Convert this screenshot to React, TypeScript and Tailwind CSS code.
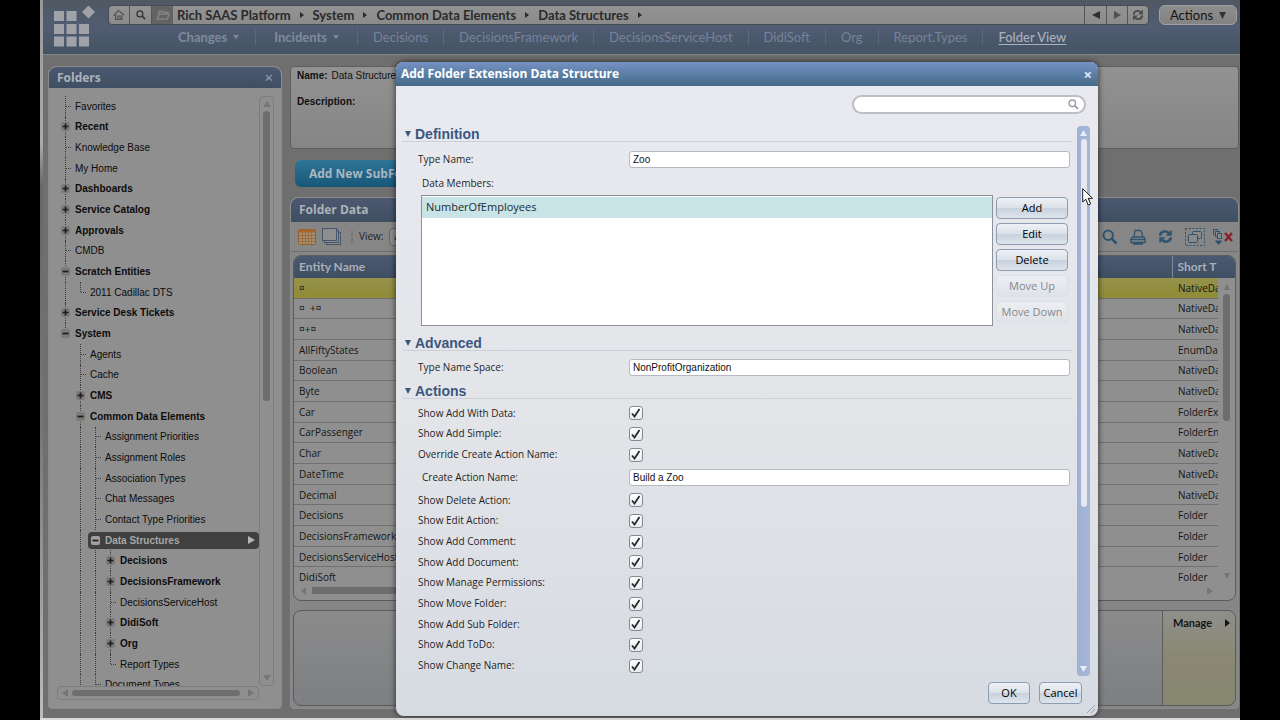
import React from "react";

type Node = { label: string; guides: string; state?: "plus" | "minus"; last?: boolean; selected?: boolean };

/* guides: one letter for each ancestor column, "l" for a dotted line, "b" for blank */
const tree: Node[] = [
  { label: "Favorites", guides: "" },
  { label: "Recent", guides: "", state: "plus" },
  { label: "Knowledge Base", guides: "" },
  { label: "My Home", guides: "" },
  { label: "Dashboards", guides: "", state: "plus" },
  { label: "Service Catalog", guides: "", state: "plus" },
  { label: "Approvals", guides: "", state: "plus" },
  { label: "CMDB", guides: "" },
  { label: "Scratch Entities", guides: "", state: "minus" },
  { label: "2011 Cadillac DTS", guides: "l", last: true },
  { label: "Service Desk Tickets", guides: "", state: "plus" },
  { label: "System", guides: "", state: "minus", last: true },
  { label: "Agents", guides: "b" },
  { label: "Cache", guides: "b" },
  { label: "CMS", guides: "b", state: "plus" },
  { label: "Common Data Elements", guides: "b", state: "minus" },
  { label: "Assignment Priorities", guides: "bl" },
  { label: "Assignment Roles", guides: "bl" },
  { label: "Association Types", guides: "bl" },
  { label: "Chat Messages", guides: "bl" },
  { label: "Contact Type Priorities", guides: "bl" },
  { label: "Data Structures", guides: "bl", state: "minus", selected: true },
  { label: "Decisions", guides: "bll", state: "plus" },
  { label: "DecisionsFramework", guides: "bll", state: "plus" },
  { label: "DecisionsServiceHost", guides: "bll" },
  { label: "DidiSoft", guides: "bll", state: "plus" },
  { label: "Org", guides: "bll", state: "plus" },
  { label: "Report Types", guides: "bll", last: true },
  { label: "Document Types", guides: "bl" },
];

const entities: [string, string][] = [
  ["¤", "NativeDa"],
  ["¤  +¤", "NativeDa"],
  ["¤+¤", "NativeDa"],
  ["AllFiftyStates", "EnumDa"],
  ["Boolean", "NativeDa"],
  ["Byte", "NativeDa"],
  ["Car", "FolderEx"],
  ["CarPassenger", "FolderEn"],
  ["Char", "NativeDa"],
  ["DateTime", "NativeDa"],
  ["Decimal", "NativeDa"],
  ["Decisions", "Folder"],
  ["DecisionsFramework", "Folder"],
  ["DecisionsServiceHost", "Folder"],
  ["DidiSoft", "Folder"],
];

const crumbs = ["Rich SAAS Platform", "System", "Common Data Elements", "Data Structures"];
const menu = ["Decisions", "DecisionsFramework", "DecisionsServiceHost", "DidiSoft", "Org", "Report.Types"];
const createFlags = ["Show Add With Data:", "Show Add Simple:", "Override Create Action Name:"];
const actionFlags = [
  "Show Delete Action:",
  "Show Edit Action:",
  "Show Add Comment:",
  "Show Add Document:",
  "Show Manage Permissions:",
  "Show Move Folder:",
  "Show Add Sub Folder:",
  "Show Add ToDo:",
  "Show Change Name:",
];

function Tri({ dir, className = "" }: { dir: "up" | "down" | "left" | "right"; className?: string }) {
  const d = { up: "M4 0L8 8H0Z", down: "M0 0H8L4 8Z", left: "M8 0V8L0 4Z", right: "M0 0L8 4L0 8Z" }[dir];
  return (
    <svg viewBox="0 0 8 8" preserveAspectRatio="none" className={`shrink-0 ${className}`} fill="currentColor" aria-hidden="true">
      <path d={d} />
    </svg>
  );
}

function Lens({ className = "" }: { className?: string }) {
  return (
    <svg viewBox="0 0 16 16" className={`shrink-0 ${className}`} fill="none" stroke="currentColor" aria-hidden="true">
      <circle cx="6.2" cy="6.2" r="4.700" strokeWidth="2" />
      <path d="M9.5 9.5L14.5 14.5" strokeWidth="2.6" />
    </svg>
  );
}

function Refresh({ className = "" }: { className?: string }) {
  return (
    <svg viewBox="0 0 16 16" className={`shrink-0 ${className}`} fill="currentColor" aria-hidden="true">
      <path d="M1 7.2C1 3.5 3.8 1.2 7.4 1.2C9.3 1.2 10.9 1.9 12 3L14.6 0.8V7.2H8.2L10.3 5C9.5 4.2 8.5 3.8 7.4 3.8C5.2 3.8 4 5.2 3.8 7.2Z" />
      <path d="M15 8.8C15 12.5 12.2 14.8 8.6 14.8C6.7 14.8 5.1 14.1 4 13L1.4 15.2V8.8H7.8L5.7 11C6.5 11.8 7.5 12.2 8.6 12.2C10.8 12.2 12 10.8 12.2 8.8Z" />
    </svg>
  );
}

function Logo() {
  return (
    <svg viewBox="0 0 42 42" className="h-[42px] w-[42px] shrink-0 text-[#9fa3a8]" fill="currentColor" aria-label="Logo">
      <path d="M0 6h10v10H0zM12.500 6h10v10h-10zM0 19h10v10H0zM12.500 19h10v10h-10zM25 19h10v10H25zM0 31.500h10v10H0zM12.500 31.500h10v10h-10zM25 31.500h10v10H25z" />
      <path d="M34.500 0.500L41 7L34.500 13.500L28 7Z" />
    </svg>
  );
}

function TreeRow({ node }: { node: Node }) {
  const { label, guides, state, last, selected } = node;
  return (
    <li className="flex min-h-0 flex-1 items-center">
      {guides.split("").map((g, i) => (
        <span key={i} className="flex h-full w-[15px] shrink-0 justify-center">
          {g === "l" && <span className="h-full border-l border-dotted border-[#3c3c3c]" />}
        </span>
      ))}
      <span
        className={`flex items-center ${
          selected ? "h-[17px] min-w-0 flex-1 rounded bg-[#404040] pr-1 font-bold text-[#a6a6a6]" : "h-full"
        }`}
      >
        <span className="grid h-full w-[15px] shrink-0 items-center justify-items-center">
          {!selected && (
            <span className={`col-start-1 row-start-1 border-l border-dotted border-[#3c3c3c] ${last ? "h-1/2 self-start" : "h-full"}`} />
          )}
          {state ? (
            <svg viewBox="0 0 9 9" className="col-start-1 row-start-1 h-[9px] w-[9px]" aria-hidden="true">
              <rect width="9" height="9" rx="2" fill={selected ? "#a0a0a0" : "#7b7b7b"} />
              <path d={state === "plus" ? "M1.500 4.500H7.500M4.500 1.500V7.500" : "M1.500 4.500H7.500"} stroke="#1c1c1c" strokeWidth="1.700" />
            </svg>
          ) : (
            <span className="col-start-1 row-start-1 ml-[5px] w-[5px] border-t border-dotted border-[#3c3c3c]" />
          )}
        </span>
        <a href="#node" className={`pl-[2px] whitespace-nowrap ${state ? "font-bold" : ""}`}>
          {label}
        </a>
        {selected && <Tri dir="right" className="ml-auto h-2 w-[7px] text-[#b5b5b5]" />}
      </span>
    </li>
  );
}

function Folders() {
  return (
    <aside className="flex w-[234px] shrink-0 flex-col rounded-t-lg rounded-b border border-[#8b8b8b] bg-[#8f8f8f]">
      <header className="flex h-[21px] shrink-0 items-center justify-between rounded-t-lg bg-gradient-to-b from-[#4b5870] to-[#3f4f63] px-2 font-['Open_Sans',sans-serif] text-[12px] leading-4 font-bold text-[#adb2ba]">
        <h2>Folders</h2>
        <button aria-label="Close folders" className="text-[15px] leading-none font-normal text-[#9aa3b0]">×</button>
      </header>
      <div className="flex min-h-0 flex-1 pt-2 pr-[7px] pl-[9px]">
        <div className="min-w-0 flex-1 overflow-hidden">
          <ul className="flex h-[599px] flex-col text-[10px] text-[#0c0c0c]">
            {tree.map((n) => (
              <TreeRow key={n.label} node={n} />
            ))}
          </ul>
        </div>
        <div className="flex w-[15px] flex-col items-center justify-between rounded border border-[#7c7c7c] py-1 text-[#757575]">
          <Tri dir="up" className="h-[6px] w-2" />
          <span className="mt-1 mb-auto h-[290px] w-[7px] rounded-full bg-[#6d6d6d]" />
          <Tri dir="down" className="h-[6px] w-2" />
        </div>
      </div>
      <div className="mr-[22px] mb-2 ml-2 flex h-[14px] shrink-0 items-center gap-1 rounded border border-[#7c7c7c] px-1 text-[#757575]">
        <Tri dir="left" className="h-2 w-[6px]" />
        <span className="h-[6px] flex-1 rounded-full bg-[#6d6d6d]" />
        <Tri dir="right" className="ml-1 h-2 w-[6px]" />
      </div>
    </aside>
  );
}

function TopBar() {
  return (
    <header className="flex h-[55px] shrink-0 gap-3 border-b border-[#80868c] bg-gradient-to-b from-[#505863] via-[#505c72] to-[#445463] pt-[5px] pr-[3px] pl-[11px]">
      <Logo />
      <div className="flex min-w-0 flex-1 flex-col">
        <div className="flex h-5 items-stretch">
          <div className="flex min-w-0 flex-1 overflow-hidden rounded border border-[#474c54] bg-gradient-to-b from-[#939393] to-[#8b8b8b]">
            <button aria-label="Home" className="flex w-[21px] items-center justify-center border-r border-[#555] text-[#555]">
              <svg viewBox="0 0 16 16" className="h-3 w-3" fill="none" stroke="currentColor" strokeWidth="1.600" aria-hidden="true">
                <path d="M1 9L7 2L15 8M3.500 8V14H12V8M6.500 14V9.500H9.500V14" />
              </svg>
            </button>
            <button aria-label="Search" className="flex w-[22px] items-center justify-center border-r border-[#555] text-[#333]">
              <Lens className="h-[10px] w-[10px]" />
            </button>
            <button aria-label="Folder" className="flex w-[21px] items-center justify-center bg-[#636363] text-[#858585]">
              <svg viewBox="0 0 16 12" className="h-[10px] w-[14px]" fill="none" stroke="currentColor" strokeWidth="1.600" aria-hidden="true">
                <path d="M3 5V2L8 1.500L9 3H14V5M1 11L3.500 5H15.500L13 11Z" />
              </svg>
            </button>
            <nav aria-label="Breadcrumb" className="flex min-w-0 flex-1 items-center pl-1 font-[Lato,sans-serif] text-[13px] leading-4 font-bold text-[#2a2a2a]">
              {crumbs.map((c) => (
                <span key={c} className="flex items-center">
                  <a href="#crumb" className="whitespace-nowrap">{c}</a>
                  <Tri dir="right" className="mx-[9px] h-[6px] w-1" />
                </span>
              ))}
            </nav>
            <button aria-label="Back" className="flex w-[22px] items-center justify-center border-l border-[#555] text-[#2f2f2f]">
              <Tri dir="left" className="h-2 w-2" />
            </button>
            <button aria-label="Forward" className="flex w-[21px] items-center justify-center border-l border-[#555] text-[#505050]">
              <Tri dir="right" className="h-2 w-[7px]" />
            </button>
            <button aria-label="Refresh" className="flex w-[21px] items-center justify-center border-l border-[#555] text-[#4c4c4c]">
              <Refresh className="h-3 w-3" />
            </button>
          </div>
          <button className="ml-[10px] flex w-[78px] items-center justify-center gap-[6px] rounded-md border border-[#a0a0a0] bg-gradient-to-b from-[#8d8d8d] to-[#838383] font-[Lato,sans-serif] text-[13px] leading-4 text-[#141414]">
            Actions <Tri dir="down" className="h-[7px] w-[7px] text-[#333]" />
          </button>
        </div>
        <nav aria-label="Main" className="flex h-6 items-center pl-[70px] font-[Lato,sans-serif] text-[13px] leading-4 whitespace-nowrap text-[#78829a]">
          <a href="#changes" className="flex items-center gap-[6px] pr-4 font-bold text-[#808a9c]">
            Changes <Tri dir="down" className="h-1 w-[6px]" />
          </a>
          <a href="#incidents" className="flex items-center gap-[6px] border-l border-[#5d687c] px-[18px] font-bold text-[#808a9c]">
            Incidents <Tri dir="down" className="h-1 w-[6px]" />
          </a>
          {menu.map((m) => (
            <a key={m} href="#menu" className="border-l border-[#5d687c] px-[15px]">{m}</a>
          ))}
          <a href="#folder" className="border-l border-[#5d687c] px-[15px] font-medium text-[#a9b0bd] underline underline-offset-2">
            Folder View
          </a>
        </nav>
      </div>
    </header>
  );
}

function FolderData() {
  return (
    <section className="flex min-h-0 flex-1 flex-col rounded-t-lg rounded-b border border-[#8b8b8b] bg-[#868686] font-['Open_Sans',sans-serif]">
      <h2 className="flex h-6 shrink-0 items-center rounded-t-lg bg-gradient-to-b from-[#4c5870] to-[#3f4f62] px-2 text-[12px] leading-4 font-bold text-[#adb2ba]">Folder Data</h2>
      <div className="flex h-[30px] shrink-0 items-center gap-[6px] border-b border-[#6e6e6e] pr-[5px] pl-[7px] text-[10px] text-[#222]">
        <svg viewBox="0 0 18 16" className="h-4 w-[18px]" aria-hidden="true">
          <rect x="0.500" y="0.500" width="17" height="15" rx="1" fill="#a39077" stroke="#96602c" />
          <path d="M1 2H17" stroke="#a8662a" strokeWidth="3" />
          <path d="M1 6.500H17M1 9.500H17M1 12.500H17M4.500 3V15M7.500 3V15M10.500 3V15M13.500 3V15" stroke="#9c6c3c" />
        </svg>
        <svg viewBox="0 0 19 17" className="h-[17px] w-[19px]" fill="#8e8e8e" stroke="#47556b" aria-hidden="true">
          <rect x="4.500" y="4.500" width="14" height="12" />
          <rect x="2.500" y="2.500" width="14" height="12" />
          <rect x="0.500" y="0.500" width="14" height="12" />
        </svg>
        <span className="ml-1 h-3 border-l-2 border-dotted border-[#707070]" />
        <label htmlFor="view">View:</label>
        <select id="view" className="h-[18px] w-[120px] appearance-none rounded border border-[#666] bg-[#8e8e8e] px-1">
          <option>All</option>
        </select>
        <span className="ml-auto flex items-center gap-3 text-[#2f5470]">
          <button aria-label="Search"><Lens className="h-4 w-4" /></button>
          <button aria-label="Print">
            <svg viewBox="0 0 16 16" className="h-4 w-4" fill="none" stroke="currentColor" strokeWidth="1.300" aria-hidden="true">
              <path d="M4 8L5 1.500H10L12 3.500L12.500 8M1 9.500L3 8H13.500L15 9.500V13.500H1ZM1.500 10.500H14.500M3 15H13" />
            </svg>
          </button>
          <button aria-label="Refresh"><Refresh className="h-[15px] w-[15px]" /></button>
          <button aria-label="Select">
            <svg viewBox="0 0 20 18" className="h-[18px] w-5" fill="#8a8a8a" stroke="currentColor" aria-hidden="true">
              <rect x="0.500" y="0.500" width="19" height="17" strokeDasharray="2 1.500" fill="none" />
              <rect x="7.500" y="3.500" width="9" height="7" rx="1" />
              <rect x="3.500" y="6.500" width="9" height="8" rx="1" />
            </svg>
          </button>
          <button aria-label="Remove" className="-ml-1">
            <svg viewBox="0 0 20 16" className="h-4 w-5" fill="#8a8a8a" stroke="currentColor" aria-hidden="true">
              <rect x="0.500" y="0.500" width="4" height="5" />
              <rect x="2.500" y="2.500" width="4" height="5" />
              <rect x="4.500" y="4.500" width="4" height="5" />
              <path d="M2.500 12H8.500L5.500 15.500Z" fill="#2f5470" />
              <path d="M12 4L19 12M19 4L12 12" stroke="#8d1c24" strokeWidth="2.200" />
            </svg>
          </button>
        </span>
      </div>
      <div className="mx-[2px] mt-[3px] flex h-[346px] shrink-0 flex-col overflow-hidden rounded-lg border border-[#5c5c5c] bg-[#8f8f8f]">
        <div className="flex min-h-0">
          <div className="min-w-0 flex-1">
            <table className="h-[331px] w-full table-fixed border-collapse text-left text-[10px] text-[#151515]">
              <colgroup>
                <col />
                <col className="w-[46px]" />
              </colgroup>
              <thead>
                <tr className="h-[22px] bg-gradient-to-b from-[#4c5972] to-[#3f4f62] font-[Lato,sans-serif] text-[12px] leading-[14px] text-[#a9afb8]">
                  <th className="px-[5px] py-0 font-bold">Entity Name</th>
                  <th className="border-l border-[#7c8798] py-0 pl-[5px] font-bold whitespace-nowrap">Short T</th>
                </tr>
              </thead>
              <tbody>
                {entities.map(([name, type], i) => (
                  <tr key={name} className={i === 0 ? "bg-gradient-to-b from-[#96924c] to-[#8f8b35]" : "border-t border-[#707070]"}>
                    <td className="px-[5px] py-0 leading-[14px] whitespace-pre">{name}</td>
                    <td className="overflow-hidden py-0 pl-[6px] leading-[14px] whitespace-nowrap">{type}</td>
                  </tr>
                ))}
              </tbody>
            </table>
          </div>
          <div className="flex w-[17px] flex-col">
            <div className="h-[22px] shrink-0 bg-gradient-to-b from-[#4c5972] to-[#3f4f62]" />
            <div className="flex flex-1 flex-col items-center pt-[6px] pb-2 text-[#737373]">
              <Tri dir="up" className="h-[6px] w-[6px]" />
              <span className="mt-1 h-[127px] w-[7px] rounded-full bg-[#6d6d6d]" />
              <Tri dir="down" className="mt-auto h-[6px] w-[6px]" />
            </div>
          </div>
        </div>
        <div className="flex flex-1 items-start gap-[6px] pr-[22px] pl-[7px] text-[#757575]">
          <Tri dir="left" className="h-2 w-[5px]" />
          <span className="h-[7px] w-3/4 bg-[#6d6d6d]" />
          <Tri dir="right" className="ml-auto h-2 w-[6px]" />
        </div>
      </div>
      <div className="m-[2px] mt-[9px] flex min-h-0 flex-1 justify-end rounded-lg border border-[#5c5c5c] bg-gradient-to-b from-[#8b8b8b] to-[#7d7f82]">
        <a href="#manage" className="flex w-[73px] items-start justify-between rounded-r-lg border-l border-[#5c5c5c] bg-gradient-to-b from-[#8f8f8b] via-[#8a8873] to-[#87866f] pt-1 pr-[5px] pl-[10px] font-[Lato,sans-serif] text-[11px] font-bold text-[#161616]">
          Manage
          <Tri dir="right" className="mt-1 h-2 w-[5px]" />
        </a>
      </div>
    </section>
  );
}

function Section({ title }: { title: string }) {
  return (
    <h3 className="flex h-4 items-center gap-1 border-b border-[#cdd0da] pl-[3px] font-['Liberation_Sans',Arial,sans-serif] text-[14px] leading-4 font-bold text-[#3a5780]">
      <Tri dir="down" className="h-[6px] w-[6px]" />
      {title}
    </h3>
  );
}

function Check({ label }: { label: string }) {
  const id = label.replace(/\W/g, "");
  return (
    <div className="flex items-center">
      <label htmlFor={id} className="w-[211px]">{label}</label>
      <span className="grid">
        <input id={id} type="checkbox" defaultChecked className="col-start-1 row-start-1 h-[14px] w-[14px] appearance-none rounded-[3px] border border-[#86898f] bg-gradient-to-b from-white to-[#e8eaed]" />
        <svg viewBox="0 0 14 14" className="pointer-events-none col-start-1 row-start-1 h-[14px] w-[14px]" fill="none" stroke="#25282c" strokeWidth="1.800" aria-hidden="true">
          <path d="M3 7.500L5.500 10.500L10.500 3" />
        </svg>
      </span>
    </div>
  );
}

function Field({ label, value, className = "", indent = false }: { label: string; value: string; className?: string; indent?: boolean }) {
  const id = label.replace(/\W/g, "");
  return (
    <div className={`flex items-center ${className}`}>
      <label htmlFor={id} className={`w-[211px] shrink-0 ${indent ? "pl-1" : ""}`}>{label}</label>
      <input id={id} defaultValue={value} className="h-[17px] min-w-0 flex-1 rounded-[3px] border border-[#b4b9c2] bg-white px-[3px] font-['Liberation_Sans',Arial,sans-serif] text-[10px] text-[#111]" />
    </div>
  );
}

const buttonLook = "rounded border border-[#8d9cb0] bg-[linear-gradient(#eef1f5,#dbe1e9_50%,#c8d2de_52%,#dde4eb)] text-[11px] leading-4 text-black";
const disabledLook = "rounded border border-[#dde0e6] bg-gradient-to-b from-[#eceef2] to-[#dfe2e8] text-[11px] leading-4 text-[#85888d]";

function Dialog() {
  return (
    <div role="dialog" aria-label="Add Folder Extension Data Structure" className="absolute top-[62px] bottom-[2px] left-[356px] flex w-[702px] flex-col overflow-hidden rounded-lg bg-gradient-to-b from-[#e9eaf0] via-[#e4e5e9] to-[#d6dbe2] font-['Open_Sans',sans-serif] text-[10px] text-[#1f1f1f] shadow-[0_0_6px_rgba(0,0,0,0.7)]">
      <header className="flex h-6 shrink-0 items-center justify-between bg-gradient-to-b from-[#7691c3] via-[#5b7fa6] to-[#456a88] pr-[6px] pl-[5px] text-[12px] leading-4 font-bold text-white">
        <h2>Add Folder Extension Data Structure</h2>
        <button aria-label="Close" className="text-[15px] leading-none text-[#dfe8f3]">×</button>
      </header>
      <div className="flex shrink-0 justify-end pt-[9px] pr-3 pb-3">
        <div className="flex h-[19px] w-[234px] items-center rounded-full border-2 border-[#bcbec3] bg-white pr-[5px] pl-2">
          <input aria-label="Search" className="min-w-0 flex-1 outline-none" />
          <Lens className="h-[11px] w-[11px] text-[#999da3]" />
        </div>
      </div>
      <div className="flex min-h-0 flex-1 pr-2 pl-[6px]">
        <div className="min-w-0 flex-1 overflow-hidden pr-[5px]">
          <Section title="Definition" />
          <Field label="Type Name:" value="Zoo" className="h-[34px] pr-[2px] pl-4" />
          <p id="members" className="h-[14px] pl-5 leading-[14px]">Data Members:</p>
          <div className="mt-[5px] flex h-[131px] gap-[3px] pr-1 pl-[19px]">
            <ul role="listbox" aria-labelledby="members" className="min-w-0 flex-1 border border-[#8b9199] bg-white">
              <li role="option" aria-selected="true" className="mt-px h-[21px] bg-[#c9e4e6] px-1 text-[11px] leading-5 text-[#1c2b33]">NumberOfEmployees</li>
            </ul>
            <div className="flex w-[72px] flex-col gap-1 pt-[2px]">
              <button className={`h-[22px] ${buttonLook}`}>Add</button>
              <button className={`h-[22px] ${buttonLook}`}>Edit</button>
              <button className={`h-[22px] ${buttonLook}`}>Delete</button>
              <button disabled className={`h-[22px] ${disabledLook}`}>Move Up</button>
              <button disabled className={`h-[22px] ${disabledLook}`}>Move Down</button>
            </div>
          </div>
          <div className="mt-[9px]">
            <Section title="Advanced" />
          </div>
          <Field label="Type Name Space:" value="NonProfitOrganization" className="h-8 pr-[2px] pl-4" />
          <Section title="Actions" />
          <div className="mt-1 grid h-[62px] auto-rows-fr pl-4">
            {createFlags.map((f) => (
              <Check key={f} label={f} />
            ))}
          </div>
          <Field label="Create Action Name:" value="Build a Zoo" className="h-[25px] pr-[2px] pl-4" indent />
          <div className="grid h-[186px] auto-rows-fr pl-4">
            {actionFlags.map((f) => (
              <Check key={f} label={f} />
            ))}
          </div>
        </div>
        <div className="flex w-[13px] shrink-0 flex-col items-center rounded bg-gradient-to-r from-[#9fb0d4] to-[#a5b6d8] py-1 text-[#e8eef8]">
          <Tri dir="up" className="h-[6px] w-[7px]" />
          <span className="mt-[3px] h-[368px] w-[6px] rounded-full bg-[#e3e8f1]" />
          <Tri dir="down" className="mt-auto h-[6px] w-[7px]" />
        </div>
      </div>
      <footer className="flex h-10 shrink-0 justify-end gap-[9px] pt-[6px] pr-4">
        <button className={`h-[22px] w-[42px] ${buttonLook}`}>OK</button>
        <button className={`h-[22px] w-[43px] ${buttonLook}`}>Cancel</button>
      </footer>
      <svg viewBox="0 0 8 8" className="absolute right-[3px] bottom-[3px] h-2 w-2" stroke="#9aa1aa" aria-hidden="true">
        <path d="M0 8L8 0M4 8L8 4" />
      </svg>
    </div>
  );
}

export default function App() {
  return (
    <div className="flex h-screen bg-black px-10 font-['Liberation_Sans',Arial,sans-serif]">
      <div className="relative flex min-w-0 flex-1 flex-col overflow-hidden border-b-2 border-[#d8d8dc] bg-[#6f6f6f]">
        <div className="flex min-h-0 flex-1">
          <div className="w-[3px] shrink-0 bg-[linear-gradient(#999,#aaa_20%,#666_26%,#777_60%,#bbb)]" />
          <div className="flex min-w-0 flex-1 flex-col">
            <TopBar />
            <div className="flex min-h-0 flex-1 gap-2 pt-[11px] pr-px pb-[9px] pl-[5px]">
              <Folders />
              <main className="flex min-w-0 flex-1 flex-col">
                <dl className="h-[83px] shrink-0 rounded border border-[#5e5e5e] bg-gradient-to-b from-[#929292] to-[#858585] px-[6px] pt-[2px] text-[10px] text-[#101010]">
                  <div className="flex gap-1 leading-[14px]">
                    <dt className="font-bold">Name:</dt>
                    <dd>Data Structures</dd>
                  </div>
                  <div className="mt-3 leading-[14px]">
                    <dt className="font-bold">Description:</dt>
                  </div>
                </dl>
                <button className="mt-[11px] mb-[10px] ml-[5px] h-[27px] w-[160px] shrink-0 rounded-md bg-gradient-to-b from-[#2f7496] to-[#17587a] pl-[14px] text-left font-['Open_Sans',sans-serif] text-[12px] leading-4 font-bold text-[#a9b6bf]">
                  Add New SubFolder
                </button>
                <FolderData />
              </main>
            </div>
          </div>
        </div>
        <Dialog />
        <svg viewBox="0 0 12 18" className="pointer-events-none absolute top-[188px] left-[1042px] h-[18px] w-3" aria-hidden="true">
          <path d="M0.700 0.700V14L3.800 11.200L6.200 17L8.600 16L6.200 10.300H10.500Z" fill="#fff" stroke="#1a1a1a" />
        </svg>
      </div>
    </div>
  );
}
